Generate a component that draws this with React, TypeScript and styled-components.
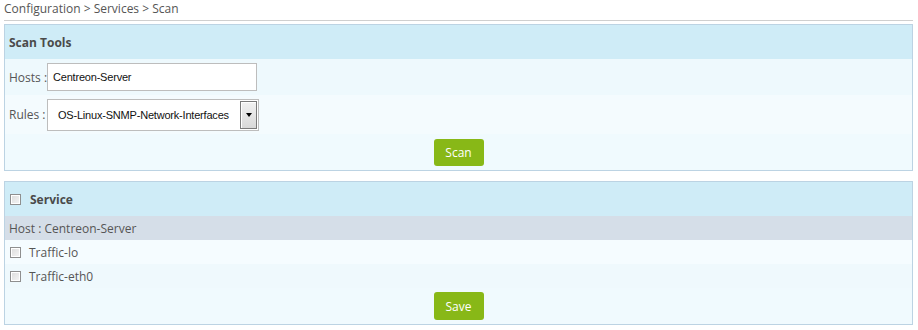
import React from "react";
import styled, { createGlobalStyle } from "styled-components";

const Global = createGlobalStyle`
  html, body { margin: 0; padding: 0; background: #fff; }
  body { font-family: "Open Sans", "DejaVu Sans", sans-serif; font-size: 12px; color: #555; }
  * { box-sizing: border-box; }
`;

const Page = styled.div`
  width: 918px;
  padding: 0 5px 0 4px;
`;

const Breadcrumb = styled.div`
  height: 21px;
  line-height: 18px;
  color: #555;
  border-bottom: 1px solid #cfcfcf;
  margin-bottom: 3px;
  white-space: nowrap;
`;

const Panel = styled.section<{ $gap?: number }>`
  border: 1px solid #bcd3e3;
  background: #f0fafe;
  margin-top: ${(p) => p.$gap ?? 0}px;
`;

const Header = styled.div`
  height: 34px;
  display: flex;
  align-items: center;
  gap: 9px;
  padding-left: 4px;
  background: #cfecf7;
  font-weight: 700;
  color: #4a4a4a;
`;

const Row = styled.div<{ $h: number; $bg?: string; $center?: boolean }>`
  height: ${(p) => p.$h}px;
  display: flex;
  align-items: center;
  justify-content: ${(p) => (p.$center ? "center" : "flex-start")};
  padding-left: ${(p) => (p.$center ? 0 : 4)}px;
  background: ${(p) => p.$bg ?? "transparent"};
  color: #555;
  white-space: nowrap;
`;

const Label = styled.span`
  width: 38px;
  flex: none;
  white-space: nowrap;
`;

const FieldFont = `
  font-family: "Liberation Sans", Arial, sans-serif;
  font-size: 11px;
  letter-spacing: -0.2px;
  color: #111;
`;

const TextInput = styled.div`
  ${FieldFont}
  width: 210px;
  height: 28px;
  border: 1px solid #bdbdbd;
  background: #fff;
  display: flex;
  align-items: center;
  padding-left: 5px;
`;

const Select = styled.div`
  ${FieldFont}
  width: 212px;
  height: 32px;
  border: 1px solid #bdbdbd;
  background: #fff;
  display: flex;
  align-items: center;
  padding: 1px;
`;

const SelectText = styled.span`
  flex: 1;
  padding-left: 9px;
  white-space: nowrap;
  overflow: hidden;
`;

const Arrow = styled.span`
  width: 17px;
  height: 28px;
  flex: none;
  border: 1px solid #7a7a7a;
  box-shadow: inset 1px 1px 0 #fff;
  background: linear-gradient(#f2f2f2, #d8d8d8);
  display: flex;
  align-items: center;
  justify-content: center;
  &::after {
    content: "";
    border-left: 3px solid transparent;
    border-right: 3px solid transparent;
    border-top: 4px solid #000;
  }
`;

const Button = styled.button<{ $w: number; $h: number }>`
  width: ${(p) => p.$w}px;
  height: ${(p) => p.$h}px;
  border: none;
  border-radius: 3px;
  background: #88b817;
  color: #fff;
  font-family: "Open Sans", "DejaVu Sans", sans-serif;
  font-size: 12px;
  padding: 0;
`;

const Check = styled.span`
  width: 11px;
  height: 11px;
  flex: none;
  border: 1px solid #8f8f8f;
  background: linear-gradient(135deg, #dcdcdc, #f6f6f6);
  box-shadow: inset 0 0 0 1px #fff;
`;

const ItemRow = styled(Row)`
  gap: 8px;
  padding-left: 5px;
`;

const HeaderCheck = styled(Check)`
  margin-left: 1px;
`;

export default function App() {
  return (
    <Page>
      <Global />
      <Breadcrumb>Configuration &gt; Services &gt; Scan</Breadcrumb>
      <Panel>
        <Header>Scan Tools</Header>
        <Row $h={36} $bg="#eef9fd">
          <Label>Hosts :</Label>
          <TextInput>Centreon-Server</TextInput>
        </Row>
        <Row $h={39} $bg="#f4fbfe">
          <Label>Rules :</Label>
          <Select>
            <SelectText>OS-Linux-SNMP-Network-Interfaces</SelectText>
            <Arrow />
          </Select>
        </Row>
        <Row $h={36} $center>
          <Button $w={50} $h={27}>Scan</Button>
        </Row>
      </Panel>
      <Panel $gap={10}>
        <Header>
          <HeaderCheck />
          Service
        </Header>
        <Row $h={24} $bg="#d5dee8">Host : Centreon-Server</Row>
        <ItemRow $h={24} $bg="#f5fcff">
          <Check />
          Traffic-lo
        </ItemRow>
        <ItemRow $h={24} $bg="#eff9fd">
          <Check />
          Traffic-eth0
        </ItemRow>
        <Row $h={36} $center>
          <Button $w={50} $h={28}>Save</Button>
        </Row>
      </Panel>
    </Page>
  );
}
